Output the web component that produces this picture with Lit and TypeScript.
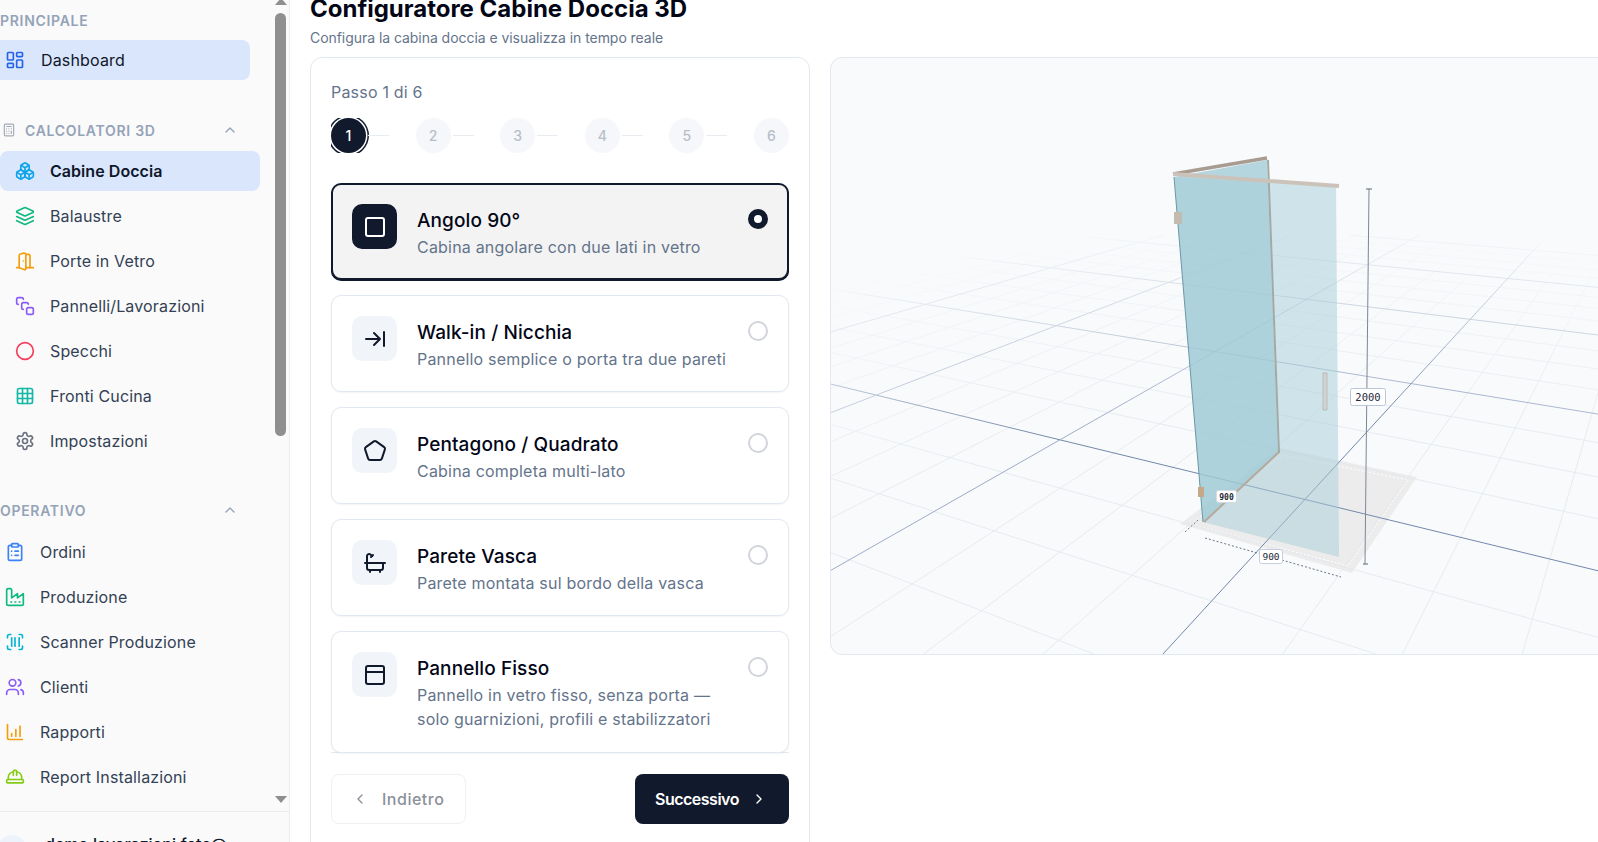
import { LitElement, html, css, svg } from "lit";
import { customElement } from "lit/decorators.js";

const stroke = (body: unknown, size = 20) => html`<svg width=${size} height=${size} viewBox="0 0 24 24" fill="none" stroke="currentColor" stroke-width="2" stroke-linecap="round" stroke-linejoin="round">${body}</svg>`;

const icons: Record<string, unknown> = {
  dashboard: svg`<rect width="7" height="9" x="3" y="3" rx="1"/><rect width="7" height="5" x="14" y="3" rx="1"/><rect width="7" height="9" x="14" y="12" rx="1"/><rect width="7" height="5" x="3" y="16" rx="1"/>`,
  calc: svg`<rect width="16" height="20" x="4" y="2" rx="2"/><line x1="8" x2="16" y1="6" y2="6"/><path d="M16 14v4M8 10h.01M12 10h.01M16 10h.01M8 14h.01M12 14h.01M8 18h.01M12 18h.01"/>`,
  boxes: svg`<path d="M2.97 12.92A2 2 0 0 0 2 14.63v3.24a2 2 0 0 0 .97 1.71l3 1.8a2 2 0 0 0 2.06 0L12 19v-5.5l-5-3-4.03 2.42Z"/><path d="m7 16.5-4.74-2.85M7 16.5l5-3M7 16.5v5.17"/><path d="M12 13.5V19l3.97 2.38a2 2 0 0 0 2.06 0l3-1.8a2 2 0 0 0 .97-1.71v-3.24a2 2 0 0 0-.97-1.71L17 10.5l-5 3Z"/><path d="m17 16.5-5-3M17 16.5l4.74-2.85M17 16.5v5.17"/><path d="M7.97 4.42A2 2 0 0 0 7 6.13v4.37l5 3 5-3V6.13a2 2 0 0 0-.97-1.71l-3-1.8a2 2 0 0 0-2.06 0l-3 1.8Z"/><path d="M12 8 7.26 5.15M12 8l4.74-2.85M12 13.5V8"/>`,
  layers: svg`<path d="m12.83 2.18a2 2 0 0 0-1.66 0L2.6 6.08a1 1 0 0 0 0 1.83l8.58 3.91a2 2 0 0 0 1.66 0l8.58-3.9a1 1 0 0 0 0-1.83Z"/><path d="m22 17.65-9.17 4.16a2 2 0 0 1-1.66 0L2 17.65"/><path d="m22 12.65-9.17 4.16a2 2 0 0 1-1.66 0L2 12.65"/>`,
  door: svg`<path d="M13 4h3a2 2 0 0 1 2 2v14"/><path d="M2 20h3"/><path d="M13 20h9"/><path d="M10 12v.01"/><path d="M13 4.56v16.88a1 1 0 0 1-1.24.97L5 20V5.56a2 2 0 0 1 1.51-1.94l4-1A2 2 0 0 1 13 4.56Z"/>`,
  pieces: svg`<path d="M4 10c-1.1 0-2-.9-2-2V4c0-1.1.9-2 2-2h4c1.1 0 2 .9 2 2"/><path d="M10 16c-1.1 0-2-.9-2-2v-4c0-1.1.9-2 2-2h4c1.1 0 2 .9 2 2"/><rect width="8" height="8" x="14" y="14" rx="2"/>`,
  circle: svg`<circle cx="12" cy="12" r="10"/>`,
  grid: svg`<rect width="18" height="18" x="3" y="3" rx="2"/><path d="M3 9h18M3 15h18M9 3v18M15 3v18"/>`,
  gear: svg`<path d="M12.22 2h-.44a2 2 0 0 0-2 2v.18a2 2 0 0 1-1 1.73l-.43.25a2 2 0 0 1-2 0l-.15-.08a2 2 0 0 0-2.73.73l-.22.38a2 2 0 0 0 .73 2.73l.15.1a2 2 0 0 1 1 1.72v.51a2 2 0 0 1-1 1.74l-.15.09a2 2 0 0 0-.73 2.73l.22.38a2 2 0 0 0 2.73.73l.15-.08a2 2 0 0 1 2 0l.43.25a2 2 0 0 1 1 1.73V20a2 2 0 0 0 2 2h.44a2 2 0 0 0 2-2v-.18a2 2 0 0 1 1-1.73l.43-.25a2 2 0 0 1 2 0l.15.08a2 2 0 0 0 2.73-.73l.22-.39a2 2 0 0 0-.73-2.73l-.15-.08a2 2 0 0 1-1-1.74v-.5a2 2 0 0 1 1-1.74l.15-.09a2 2 0 0 0 .73-2.73l-.22-.38a2 2 0 0 0-2.73-.73l-.15.08a2 2 0 0 1-2 0l-.43-.25a2 2 0 0 1-1-1.73V4a2 2 0 0 0-2-2z"/><circle cx="12" cy="12" r="3"/>`,
  clipboard: svg`<rect width="8" height="4" x="8" y="2" rx="1"/><path d="M16 4h2a2 2 0 0 1 2 2v14a2 2 0 0 1-2 2H6a2 2 0 0 1-2-2V6a2 2 0 0 1 2-2h2"/><path d="M12 11h4M12 16h4M8 11h.01M8 16h.01"/>`,
  factory: svg`<path d="M2 20a2 2 0 0 0 2 2h16a2 2 0 0 0 2-2V8l-7 5V8l-7 5V4a2 2 0 0 0-2-2H4a2 2 0 0 0-2 2Z"/><path d="M17 18h1M12 18h1M7 18h1"/>`,
  scan: svg`<path d="M3 7V5a2 2 0 0 1 2-2h2"/><path d="M17 3h2a2 2 0 0 1 2 2v2"/><path d="M21 17v2a2 2 0 0 1-2 2h-2"/><path d="M7 21H5a2 2 0 0 1-2-2v-2"/><path d="M8 7v10M12 7v10M17 7v10"/>`,
  users: svg`<path d="M16 21v-2a4 4 0 0 0-4-4H6a4 4 0 0 0-4 4v2"/><circle cx="9" cy="7" r="4"/><path d="M22 21v-2a4 4 0 0 0-3-3.87"/><path d="M16 3.13a4 4 0 0 1 0 7.75"/>`,
  chart: svg`<path d="M3 3v16a2 2 0 0 0 2 2h16"/><path d="M8 17v-3M13 17V9M18 17V5"/>`,
  hardhat: svg`<path d="M2 18a1 1 0 0 0 1 1h18a1 1 0 0 0 1-1v-2a1 1 0 0 0-1-1H3a1 1 0 0 0-1 1v2z"/><path d="M10 10V5a1 1 0 0 1 1-1h2a1 1 0 0 1 1 1v5"/><path d="M4 15v-3a6 6 0 0 1 6-6"/><path d="M14 6a6 6 0 0 1 6 6v3"/>`,
  chevUp: svg`<path d="m18 15-6-6-6 6"/>`,
  chevLeft: svg`<path d="m15 18-6-6 6-6"/>`,
  chevRight: svg`<path d="m9 18 6-6-6-6"/>`,
  square: svg`<rect width="18" height="18" x="3" y="3" rx="2"/>`,
  arrowBar: svg`<path d="M3 12h14M11 6l6 6-6 6M21 5v14"/>`,
  pentagon: svg`<path d="M10.83 2.38a2 2 0 0 1 2.34 0l8 5.74a2 2 0 0 1 .73 2.25l-3.04 9.26a2 2 0 0 1-1.9 1.37H7.04a2 2 0 0 1-1.9-1.37L2.1 10.37a2 2 0 0 1 .73-2.25z"/>`,
  bath: svg`<path d="M10 4 8 6"/><path d="M17 19v2"/><path d="M2 12h20"/><path d="M7 19v2"/><path d="M9 5 7.621 3.621A2.121 2.121 0 0 0 4 5v12a2 2 0 0 0 2 2h12a2 2 0 0 0 2-2v-5"/>`,
  panel: svg`<rect width="18" height="18" x="3" y="3" rx="2"/><path d="M3 9h18"/>`,
};

const navMain = [
  { label: "Cabine Doccia", icon: "boxes", color: "#0ea5e9", active: true },
  { label: "Balaustre", icon: "layers", color: "#10b981" },
  { label: "Porte in Vetro", icon: "door", color: "#f59e0b" },
  { label: "Pannelli/Lavorazioni", icon: "pieces", color: "#8b5cf6" },
  { label: "Specchi", icon: "circle", color: "#f43f5e" },
  { label: "Fronti Cucina", icon: "grid", color: "#14b8a6" },
  { label: "Impostazioni", icon: "gear", color: "#6b7280" },
];
const navOps = [
  { label: "Ordini", icon: "clipboard", color: "#3b82f6" },
  { label: "Produzione", icon: "factory", color: "#10b981" },
  { label: "Scanner Produzione", icon: "scan", color: "#06b6d4" },
  { label: "Clienti", icon: "users", color: "#8b5cf6" },
  { label: "Rapporti", icon: "chart", color: "#f59e0b" },
  { label: "Report Installazioni", icon: "hardhat", color: "#84cc16" },
];
const options = [
  { title: "Angolo 90°", desc: "Cabina angolare con due lati in vetro", icon: "square", selected: true },
  { title: "Walk-in / Nicchia", desc: "Pannello semplice o porta tra due pareti", icon: "arrowBar" },
  { title: "Pentagono / Quadrato", desc: "Cabina completa multi-lato", icon: "pentagon" },
  { title: "Parete Vasca", desc: "Parete montata sul bordo della vasca", icon: "bath" },
  { title: "Pannello Fisso", desc: html`Pannello in vetro fisso, senza porta —<br />solo guarnizioni, profili e stabilizzatori`, icon: "panel" },
];

// floor grid: both line families run to a vanishing point, evenly spaced along y=654
const V1 = [-357, 95];
const V2 = [1688, 82];
function gridLines() {
  const lines: { x1: number; y1: number; x2: number; y2: number; major: boolean; strong: boolean }[] = [];
  const add = (v: number[], base: number, step: number) => {
    for (let i = -32; i <= 32; i++) {
      const x = base + (i * step) / 4;
      const major = i % 4 === 0;
      // clip the line at the fade height
      const yTop = 235;
      const t = (yTop - 654) / (v[1] - 654);
      lines.push({ x1: x, y1: 654, x2: x + (v[0] - x) * t, y2: yTop, major, strong: i === 0 });
    }
  };
  add(V1, 1940, 1128);
  add(V2, 1163, 479);
  return lines;
}

@customElement("app-root")
export class AppRoot extends LitElement {
  static styles = css`
    :host {
      display: flex;
      width: 1598px;
      height: 842px;
      overflow: hidden;
      background: #fff;
      font-family: Inter, "Noto Sans", sans-serif;
      color: #0f172a;
    }
    * { box-sizing: border-box; }
    svg { display: block; flex: none; }

    .sidebar {
      width: 290px;
      flex: none;
      display: flex;
      flex-direction: column;
      background: #fafafa;
      border-right: 1px solid #ececec;
      overflow: hidden;
    }
    .side-top { flex: 1; display: flex; min-height: 0; }
    .nav { flex: 1; min-width: 0; padding-top: 11px; }
    .bar {
      width: 17px;
      margin-left: 2px;
      flex: none;
      display: flex;
      flex-direction: column;
      align-items: center;
    }
    .bar .up { width: 0; height: 0; border: 6.5px solid transparent; border-top: 0; border-bottom: 7px solid #8f8f8f; margin-top: -2px; }
    .bar .thumb { width: 11px; height: 423px; margin-top: 8px; border-radius: 6px; background: #8f8f8f; }
    .bar .down { width: 0; height: 0; border: 6.5px solid transparent; border-bottom: 0; border-top: 7px solid #8f8f8f; margin-top: auto; margin-bottom: 8px; }

    .label {
      height: 18px;
      display: flex;
      align-items: center;
      font-size: 14px;
      font-weight: 600;
      letter-spacing: 0.7px;
      color: #94a3b8;
      white-space: nowrap;
    }
    .group-head {
      display: flex;
      align-items: center;
      height: 18px;
      padding-left: 2px;
      width: 238px;
      color: #94a3b8;
      font-size: 14px;
      font-weight: 600;
      letter-spacing: 0.7px;
      white-space: nowrap;
    }
    .group-head .txt { margin-left: 9px; }
    .group-head.plain { padding-left: 0; }
    .group-head.plain .txt { margin-left: 0; }
    .group-head svg:last-child { margin-left: auto; }
    .item {
      display: flex;
      align-items: center;
      height: 40px;
      gap: 15px;
      padding-left: 15px;
      font-size: 16px;
      letter-spacing: 0.15px;
      color: #334155;
      white-space: nowrap;
      border-radius: 8px;
      margin-bottom: 5px;
      width: 260px;
    }
    .item.sub { padding-left: 5px; }
    .item.active { background: #d9e6fc; color: #0f172a; font-weight: 600; letter-spacing: 0.05px; }
    .item.dash { margin: 11px 0 0 -10px; padding-left: 15px; gap: 16px; color: #0f172a; font-weight: 400; letter-spacing: 0.15px; }
    .gap-a { height: 41px; }
    .gap-b { height: 35px; }
    .gap-h1 { height: 12px; }
    .gap-h2 { height: 13px; }

    .user {
      height: 31px;
      flex: none;
      border-top: 1px solid #ececec;
      display: flex;
      align-items: flex-start;
      gap: 19px;
      padding-top: 22px;
      font-size: 16px;
      font-weight: 500;
      white-space: nowrap;
      overflow: hidden;
    }
    .avatar { width: 28px; height: 28px; margin-left: -2px; border-radius: 50%; background: #eef3fb; flex: none; margin-top: 1px; }

    .main { flex: 1; min-width: 0; padding-left: 20px; }
    .head { margin-top: -7px; }
    h1 { margin: 0; font-size: 24px; line-height: 32px; font-weight: 700; color: #020617; }
    .sub-title { font-size: 14px; line-height: 20px; color: #64748b; margin-top: 3px; letter-spacing: -0.05px; }
    .columns { display: flex; gap: 20px; margin-top: 9px; width: 1400px; }

    .wizard {
      width: 500px;
      height: 800px;
      flex: none;
      border: 1px solid #e2e8f0;
      border-radius: 12px;
      padding: 20px 20px 0;
      background: #fff;
    }
    .step-txt { font-size: 16px; line-height: 24px; color: #64748b; margin-top: 2px; letter-spacing: 0.2px; }
    .steps { display: flex; justify-content: space-between; margin-top: 14px; overflow: hidden; height: 35px; }
    .step { display: flex; align-items: center; }
    .dot {
      width: 35px;
      height: 35px;
      border-radius: 50%;
      background: #f6f7fa;
      color: #b8bec8;
      font-size: 14px;
      font-weight: 500;
      display: flex;
      align-items: center;
      justify-content: center;
    }
    .dot.on { background: #111a2c; color: #fff; box-shadow: 0 0 0 1.5px #fff, 0 0 0 3px #111a2c; }
    .line { width: 21px; height: 1px; background: #e8ecf1; margin-left: 2px; }

    .list { height: 570px; margin-top: 30px; display: flex; flex-direction: column; gap: 15px; border-bottom: 1px solid #e2e8f0; }
    .opt {
      display: flex;
      gap: 20px;
      padding: 20px;
      border: 1px solid #e2e8f0;
      border-radius: 10px;
      background: #fff;
      box-shadow: 0 1px 2px rgba(15, 23, 42, 0.05);
      height: 97px;
      flex: none;
    }
    .opt.tall { height: 122px; }
    .opt.on { background: #f3f3f3; border: 2px solid #111a2c; padding: 19px; box-shadow: 0 1px 0 #111a2c; }
    .ic {
      width: 45px;
      height: 45px;
      flex: none;
      border-radius: 10px;
      background: #f1f5f9;
      color: #111a2c;
      display: flex;
      align-items: center;
      justify-content: center;
    }
    .opt.on .ic { background: #111a2c; color: #fff; }
    .opt-body { flex: 1; min-width: 0; }
    .opt-title { font-size: 19px; line-height: 28px; font-weight: 500; letter-spacing: 0.1px; color: #020617; margin-top: 3px; }
    .opt-desc { font-size: 16px; line-height: 24px; letter-spacing: 0.2px; color: #64748b; }
    .radio { width: 20px; height: 20px; flex: none; border-radius: 50%; border: 2px solid #d1d5db; margin-top: 5px; }
    .radio.on { border: 6.5px solid #111a2c; background: #fff; }

    .actions { display: flex; justify-content: space-between; margin-top: 21px; }
    .btn { height: 50px; border-radius: 8px; display: flex; align-items: center; font-size: 16px; font-weight: 500; }
    .back { width: 135px; padding-left: 20px; gap: 14px; border: 1px solid #eef0f4; color: #8b9099; letter-spacing: 0.5px; }
    .next { width: 154px; padding-left: 20px; gap: 12px; background: #111a2c; color: #fff; font-weight: 600; letter-spacing: -0.5px; }

    .viewer {
      position: relative;
      width: 880px;
      height: 598px;
      flex: none;
      border: 1px solid #e2e8f0;
      border-radius: 12px;
      background: #f8fafc;
      overflow: hidden;
    }
    .viewer svg { position: absolute; left: -1px; top: -1px; }
    .viewer text { font-family: "DejaVu Sans Mono", "Liberation Mono", monospace; fill: #1e293b; text-anchor: middle; }
    .viewer text.small { font-weight: 700; }
  `;

  private scene() {
    const lines = gridLines();
    // the svg's origin is the viewer's corner, world coords are page coords
    return html`<svg width="880" height="598" viewBox="830 57 880 598">
      <defs>
        <radialGradient id="fade" gradientUnits="userSpaceOnUse" cx="0" cy="0" r="1" gradientTransform="translate(1300 640) scale(900 420)">
          <stop offset="0.55" stop-color="#fff" stop-opacity="1" />
          <stop offset="1" stop-color="#fff" stop-opacity="0" />
        </radialGradient>
        <mask id="fm" maskUnits="userSpaceOnUse" x="830" y="57" width="880" height="598">
          <rect x="830" y="57" width="880" height="598" fill="url(#fade)" />
        </mask>
      </defs>
      <polygon points="1180,524 1280,448 1417,477 1352,573" fill="#ececec" />
      <polygon points="1190,524 1283,455 1408,480 1348,566" fill="none" stroke="#fff" stroke-width="1" stroke-dasharray="2 2" />
      <g mask="url(#fm)" fill="none">
        ${lines.filter((l) => !l.major).map((l) => svg`<line x1=${l.x1} y1=${l.y1} x2=${l.x2} y2=${l.y2} stroke="#e2e7ee" stroke-width="0.8" />`)}
        ${lines.filter((l) => l.major).map((l) => svg`<line x1=${l.x1} y1=${l.y1} x2=${l.x2} y2=${l.y2} stroke=${l.strong ? "#7488aa" : "#9dacc5"} stroke-width="1" />`)}
      </g>
      <polygon points="1174,177 1267,160 1278,453 1203,522" fill="#92c3d0" fill-opacity="0.65" />
      <polygon points="1174,177 1336,186 1339,557 1203,522" fill="#a6ced8" fill-opacity="0.5" />
      <line x1="1174" y1="177" x2="1203" y2="522" stroke="#6b98a6" stroke-width="1" />
      <line x1="1268" y1="160" x2="1279" y2="453" stroke="#a3aaa6" stroke-width="2" />
      <line x1="1279" y1="452" x2="1204" y2="522" stroke="#b5a99b" stroke-width="2" />
      <line x1="1173" y1="174" x2="1267" y2="158" stroke="#a89c92" stroke-width="3.5" />
      <line x1="1173" y1="174" x2="1339" y2="186" stroke="#cbc3b9" stroke-width="4" />
      <rect x="1174" y="212" width="8" height="12" fill="#c2bcb0" />
      <rect x="1198" y="487" width="6" height="10" fill="#c4a888" />
      <rect x="1323" y="373" width="4" height="37" fill="#d3d3d0" stroke="#a9a7a1" stroke-width="0.6" />
      <line x1="1369" y1="189" x2="1365" y2="564" stroke="#7c8796" stroke-width="1" />
      <path d="M1366 189h6M1363 564h5" stroke="#5b6675" stroke-width="1" />
      <line x1="1205" y1="538" x2="1341" y2="577" stroke="#6b7585" stroke-width="1" stroke-dasharray="2 2" />
      <line x1="1185" y1="532" x2="1198" y2="520" stroke="#6b7585" stroke-width="1" stroke-dasharray="2 2" />
      <rect x="1350.5" y="388.5" width="35" height="17" rx="2" fill="#fff" stroke="#bcc7d6" />
      <text x="1368" y="401" font-size="10.5">2000</text>
      <rect x="1216.5" y="490.5" width="20" height="12" rx="2" fill="#fff" stroke="#d5dbe4" />
      <text class="small" x="1226.5" y="499.5" font-size="8">900</text>
      <rect x="1259.5" y="549.5" width="23" height="14" rx="2" fill="#fff" stroke="#c5cedb" />
      <text x="1271" y="560" font-size="9.5">900</text>
    </svg>`;
  }

  private navItem(it: { label: string; icon: string; color: string; active?: boolean }, sub: boolean) {
    return html`<div class="item ${sub ? "sub" : ""} ${it.active ? "active" : ""}">
      <span style="color:${it.color}">${stroke(icons[it.icon])}</span>
      <span>${it.label}</span>
    </div>`;
  }

  render() {
    return html`
      <aside class="sidebar">
        <div class="side-top">
          <nav class="nav">
            <div class="label">PRINCIPALE</div>
            <div class="item active dash">
              <span style="color:#2563eb">${stroke(icons.dashboard)}</span><span>Dashboard</span>
            </div>
            <div class="gap-a"></div>
            <div class="group-head">
              <span style="color:#a3aab5">${stroke(icons.calc, 14)}</span>
              <span class="txt">CALCOLATORI 3D</span>
              ${stroke(icons.chevUp, 16)}
            </div>
            <div class="gap-h1"></div>
            ${navMain.map((it) => this.navItem(it, false))}
            <div class="gap-b"></div>
            <div class="group-head plain">
              <span class="txt">OPERATIVO</span>
              ${stroke(icons.chevUp, 16)}
            </div>
            <div class="gap-h2"></div>
            ${navOps.map((it) => this.navItem(it, true))}
          </nav>
          <div class="bar">
            <div class="up"></div>
            <div class="thumb"></div>
            <div class="down"></div>
          </div>
        </div>
        <div class="user">
          <div class="avatar"></div>
          <span>demo.lavorazioni.foto@</span>
        </div>
      </aside>
      <main class="main">
        <div class="head">
          <h1>Configuratore Cabine Doccia 3D</h1>
          <div class="sub-title">Configura la cabina doccia e visualizza in tempo reale</div>
        </div>
        <div class="columns">
          <section class="wizard">
            <div class="step-txt">Passo 1 di 6</div>
            <div class="steps">
              ${[1, 2, 3, 4, 5, 6].map(
                (n) => html`<div class="step">
                  <div class="dot ${n === 1 ? "on" : ""}">${n}</div>
                  ${n < 6 ? html`<div class="line"></div>` : ""}
                </div>`
              )}
            </div>
            <div class="list">
              ${options.map(
                (o, i) => html`<div class="opt ${o.selected ? "on" : ""} ${i === 4 ? "tall" : ""}">
                  <div class="ic">${stroke(icons[o.icon], 24)}</div>
                  <div class="opt-body">
                    <div class="opt-title">${o.title}</div>
                    <div class="opt-desc">${o.desc}</div>
                  </div>
                  <div class="radio ${o.selected ? "on" : ""}"></div>
                </div>`
              )}
            </div>
            <div class="actions">
              <div class="btn back">${stroke(icons.chevLeft, 16)}<span>Indietro</span></div>
              <div class="btn next"><span>Successivo</span>${stroke(icons.chevRight, 16)}</div>
            </div>
          </section>
          <section class="viewer">${this.scene()}</section>
        </div>
      </main>
    `;
  }
}
